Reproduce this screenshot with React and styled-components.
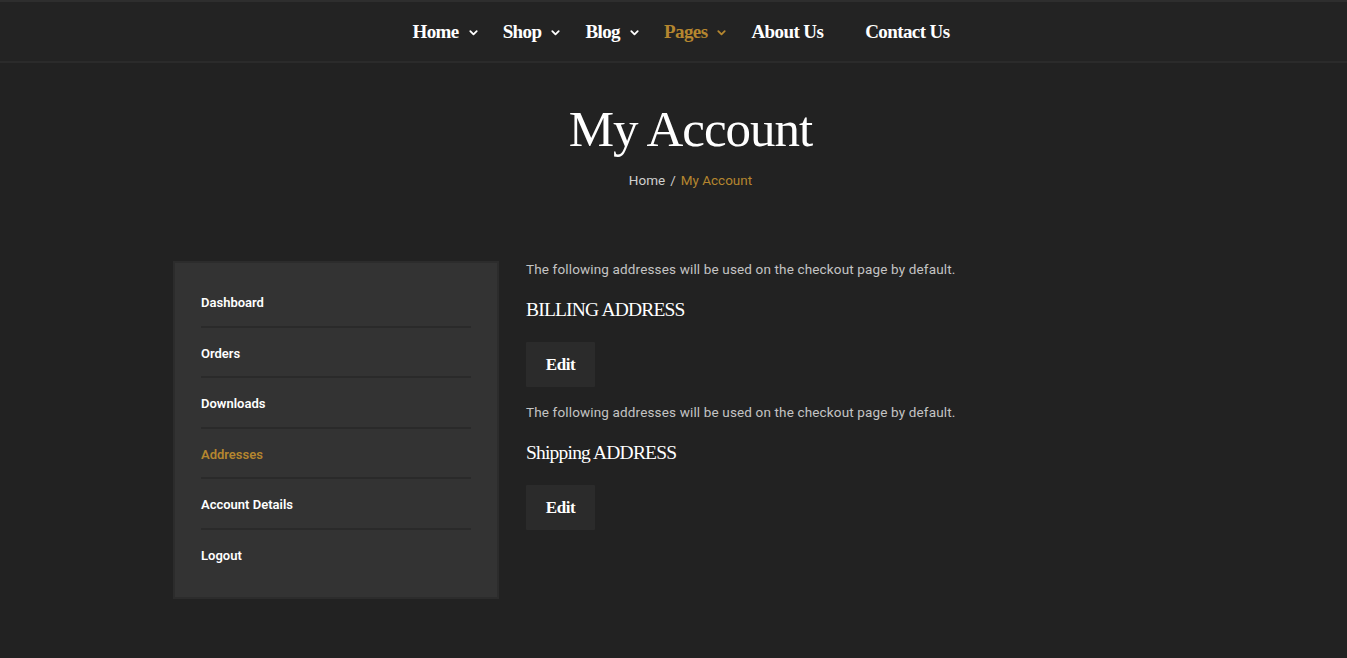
import styled, { createGlobalStyle } from "styled-components";

const GlobalStyle = createGlobalStyle`
  html, body {
    margin: 0;
    padding: 0;
    background: #222222;
  }
  body {
    font-family: "Roboto", "Liberation Sans", sans-serif;
    color: #ffffff;
  }
`;

const GOLD = "#b5862f";
const SERIF = `"Liberation Serif", "Times New Roman", serif`;

const Page = styled.div`
  min-height: 658px;
  background: #222222;
  border-top: 2px solid #2e2e2e;
`;

const Header = styled.header`
  height: 59px;
  background: #232323;
  border-bottom: 2px solid #2b2b2b;
  display: flex;
  justify-content: center;
  align-items: center;
  padding-left: 15px;
`;

const Nav = styled.nav`
  display: flex;
  align-items: center;
`;

const NavItem = styled.a`
  display: flex;
  align-items: center;
  gap: 9px;
  margin-right: ${(p) => (p.$wide ? "42px" : "24px")};
  font-family: ${SERIF};
  font-size: 19px;
  font-weight: 700;
  color: ${(p) => (p.$active ? GOLD : "#ffffff")};
  text-decoration: none;
  letter-spacing: -0.6px;
  &:last-child {
    margin-right: 0;
  }
  svg {
    width: 11px;
    height: 11px;
    margin-top: 2px;
  }
`;

const Chevron = () => (
  <svg viewBox="0 0 12 12" fill="none" stroke="currentColor" strokeWidth="2" strokeLinecap="round" strokeLinejoin="round">
    <path d="M2.5 4.5 L6 8 L9.5 4.5" />
  </svg>
);

const Banner = styled.section`
  display: flex;
  flex-direction: column;
  align-items: center;
  padding: 36px 0 0 34px;
`;

const Title = styled.h1`
  margin: 0;
  font-family: ${SERIF};
  font-weight: 400;
  font-size: 51px;
  line-height: 60px;
  letter-spacing: -1px;
  color: #ffffff;
`;

const Crumbs = styled.div`
  margin-top: 13px;
  font-size: 13.5px;
  color: #cfcfcf;
  display: flex;
  gap: 5px;
  align-items: center;
  span:last-child {
    color: ${GOLD};
  }
`;

const Main = styled.main`
  display: flex;
  gap: 27px;
  padding: 73px 0 0 173px;
`;

const Sidebar = styled.aside`
  width: 270px;
  background: #333333;
  border: 2px solid #2c2c2c;
  padding: 14px 26px 18px 26px;
  display: flex;
  flex-direction: column;
`;

const MenuItem = styled.a`
  display: block;
  padding: 18px 0 15.6px;
  font-size: 13px;
  font-weight: 600;
  color: ${(p) => (p.$active ? GOLD : "#ffffff")};
  text-decoration: none;
  border-bottom: 2px solid #2a2a2a;
  &:last-child {
    border-bottom: none;
  }
`;

const Content = styled.div`
  display: flex;
  flex-direction: column;
`;

const Note = styled.p`
  margin: 0;
  font-size: 13.5px;
  line-height: 16px;
  letter-spacing: 0.15px;
  color: #c4c4c4;
`;

const SubHeading = styled.h3`
  margin: 21px 0 0;
  font-family: ${SERIF};
  font-weight: 400;
  font-size: 19.5px;
  line-height: 24px;
  letter-spacing: -0.8px;
  color: #ffffff;
`;

const EditButton = styled.button`
  margin: 20px 0 17px;
  width: 69px;
  height: 45px;
  background: #2b2b2b;
  border: none;
  border-radius: 1px;
  font-family: ${SERIF};
  font-size: 17px;
  font-weight: 700;
  letter-spacing: -0.4px;
  color: #ffffff;
  align-self: flex-start;
  cursor: pointer;
`;

const navLinks = [
  { label: "Home", drop: true },
  { label: "Shop", drop: true },
  { label: "Blog", drop: true },
  { label: "Pages", drop: true, active: true },
  { label: "About Us", wide: true },
  { label: "Contact Us" },
];

const menu = [
  "Dashboard",
  "Orders",
  "Downloads",
  "Addresses",
  "Account Details",
  "Logout",
];

const App = () => {
  return (
    <>
      <GlobalStyle />
      <Page>
        <Header>
          <Nav>
            {navLinks.map((l) => (
              <NavItem key={l.label} href="#" $active={l.active} $wide={l.wide}>
                {l.label}
                {l.drop && <Chevron />}
              </NavItem>
            ))}
          </Nav>
        </Header>

        <Banner>
          <Title>My Account</Title>
          <Crumbs>
            <span>Home</span>
            <span>/</span>
            <span>My Account</span>
          </Crumbs>
        </Banner>

        <Main>
          <Sidebar>
            {menu.map((m) => (
              <MenuItem key={m} href="#" $active={m === "Addresses"}>
                {m}
              </MenuItem>
            ))}
          </Sidebar>
          <Content>
            <Note>The following addresses will be used on the checkout page by default.</Note>
            <SubHeading>BILLING ADDRESS</SubHeading>
            <EditButton>Edit</EditButton>
            <Note>The following addresses will be used on the checkout page by default.</Note>
            <SubHeading>Shipping ADDRESS</SubHeading>
            <EditButton>Edit</EditButton>
          </Content>
        </Main>
      </Page>
    </>
  );
};

export default App;
